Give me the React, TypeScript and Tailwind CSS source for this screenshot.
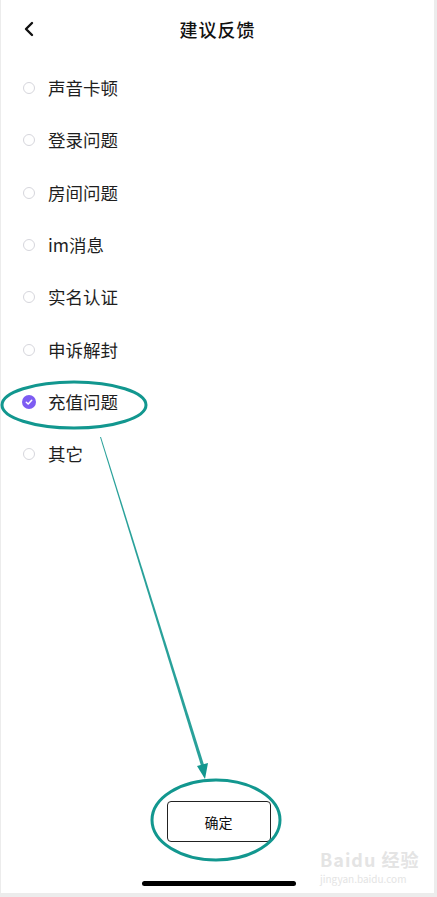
import React from 'react';

const options = ['声音卡顿', '登录问题', '房间问题', 'im消息', '实名认证', '申诉解封', '充值问题', '其它'];

const font = { fontFamily: '"Noto Sans CJK SC", "Noto Sans", sans-serif' };

export default function App() {
  const selected = 6;
  return (
    <div className="relative w-[437px] h-[897px] bg-[#ececec] overflow-hidden" style={font}>
      <div className="ml-[1px] w-[433px] h-[893px] bg-white flex flex-col">
        {/* header */}
        <div className="relative h-[58px] flex items-center justify-center">
          <svg className="absolute left-[22px] top-[21px]" width="12" height="16" viewBox="0 0 12 16">
            <path d="M9 2 L3 8 L9 14" fill="none" stroke="#111" strokeWidth="2.4" strokeLinecap="round" strokeLinejoin="round" />
          </svg>
          <span className="text-[18px] font-medium text-[#111] tracking-[1px]">建议反馈</span>
        </div>

        {/* options */}
        <div className="pt-[4px]">
          {options.map((o, i) => (
            <div key={o} className="h-[52.33px] flex items-center">
              {i === selected ? (
                <div className="ml-[21px] w-[14px] h-[14px] rounded-full bg-[#7d5cf2] flex items-center justify-center">
                  <svg width="8" height="8" viewBox="0 0 8 8">
                    <path d="M1.3 4.2 L3.2 6 L6.7 2.2" fill="none" stroke="#fff" strokeWidth="1.5" strokeLinecap="round" strokeLinejoin="round" />
                  </svg>
                </div>
              ) : (
                <div className="ml-[22px] w-[12px] h-[12px] rounded-full border border-[#d6d6dc]" />
              )}
              <span className={`${i === selected ? 'ml-[12px]' : 'ml-[13px]'} text-[17.5px] text-[#1e1e1e]`}>{o}</span>
            </div>
          ))}
        </div>

        <div className="flex-1" />

        <div className="flex justify-center">
          <button className="ml-[2px] w-[104px] h-[41px] border border-[#222] rounded-[4px] bg-white text-[14px] leading-none text-[#111]">
            确定
          </button>
        </div>
        <div className="mt-[39px] flex justify-center">
          <div className="ml-[2px] w-[154px] h-[5px] rounded-full bg-black" />
        </div>
        <div className="h-[7px]" />
      </div>

      {/* watermark */}
      <div className="absolute left-[320px] top-[850px] text-[#e4e4e4] leading-none select-none">
        <div className="text-[18px] font-bold tracking-[1px]">Baidu 经验</div>
        <div className="text-[10px] mt-[6px]">jingyan.baidu.com</div>
      </div>

      {/* annotations */}
      <svg className="absolute inset-0 pointer-events-none" width="437" height="897" viewBox="0 0 437 897">
        <ellipse cx="74" cy="405" rx="72" ry="23" fill="none" stroke="#12978f" strokeWidth="3" />
        <ellipse cx="216" cy="820" rx="64" ry="40" fill="none" stroke="#12978f" strokeWidth="3" />
        <polygon points="100,437 101,437 205,768 202,769" fill="#12978f" opacity="0.9" />
        <polygon points="197,766 208,763 205,779" fill="#12978f" />
      </svg>
    </div>
  );
}
